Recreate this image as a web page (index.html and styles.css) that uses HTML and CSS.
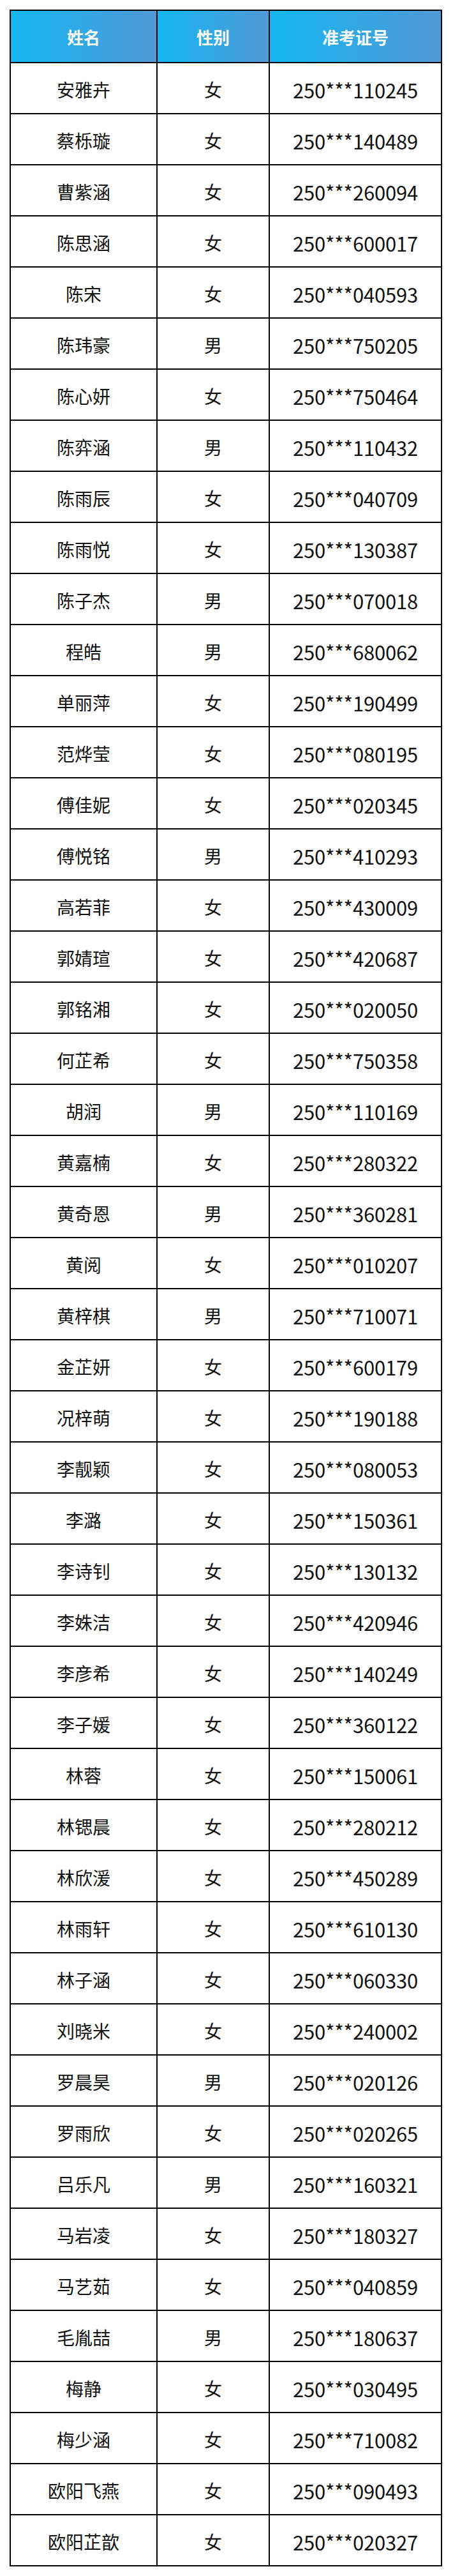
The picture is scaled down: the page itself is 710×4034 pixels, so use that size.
FILE: index.html
```html
<!DOCTYPE html>
<html lang="zh">
<head>
<meta charset="utf-8">
<title>名单</title>
<link rel="stylesheet" href="styles.css">
</head>
<body>
<table class="roster">
<colgroup><col class="c-name"><col class="c-sex"><col class="c-id"></colgroup>
<thead>
<tr><th>姓名</th><th>性别</th><th>准考证号</th></tr>
</thead>
<tbody>
<tr><td>安雅卉</td><td>女</td><td class="num">250***110245</td></tr>
<tr><td>蔡栎璇</td><td>女</td><td class="num">250***140489</td></tr>
<tr><td>曹紫涵</td><td>女</td><td class="num">250***260094</td></tr>
<tr><td>陈思涵</td><td>女</td><td class="num">250***600017</td></tr>
<tr><td>陈宋</td><td>女</td><td class="num">250***040593</td></tr>
<tr><td>陈玮豪</td><td>男</td><td class="num">250***750205</td></tr>
<tr><td>陈心妍</td><td>女</td><td class="num">250***750464</td></tr>
<tr><td>陈弈涵</td><td>男</td><td class="num">250***110432</td></tr>
<tr><td>陈雨辰</td><td>女</td><td class="num">250***040709</td></tr>
<tr><td>陈雨悦</td><td>女</td><td class="num">250***130387</td></tr>
<tr><td>陈子杰</td><td>男</td><td class="num">250***070018</td></tr>
<tr><td>程皓</td><td>男</td><td class="num">250***680062</td></tr>
<tr><td>单丽萍</td><td>女</td><td class="num">250***190499</td></tr>
<tr><td>范烨莹</td><td>女</td><td class="num">250***080195</td></tr>
<tr><td>傅佳妮</td><td>女</td><td class="num">250***020345</td></tr>
<tr><td>傅悦铭</td><td>男</td><td class="num">250***410293</td></tr>
<tr><td>高若菲</td><td>女</td><td class="num">250***430009</td></tr>
<tr><td>郭婧瑄</td><td>女</td><td class="num">250***420687</td></tr>
<tr><td>郭铭湘</td><td>女</td><td class="num">250***020050</td></tr>
<tr><td>何芷希</td><td>女</td><td class="num">250***750358</td></tr>
<tr><td>胡润</td><td>男</td><td class="num">250***110169</td></tr>
<tr><td>黄嘉楠</td><td>女</td><td class="num">250***280322</td></tr>
<tr><td>黄奇恩</td><td>男</td><td class="num">250***360281</td></tr>
<tr><td>黄阅</td><td>女</td><td class="num">250***010207</td></tr>
<tr><td>黄梓棋</td><td>男</td><td class="num">250***710071</td></tr>
<tr><td>金芷妍</td><td>女</td><td class="num">250***600179</td></tr>
<tr><td>况梓萌</td><td>女</td><td class="num">250***190188</td></tr>
<tr><td>李靓颖</td><td>女</td><td class="num">250***080053</td></tr>
<tr><td>李潞</td><td>女</td><td class="num">250***150361</td></tr>
<tr><td>李诗钊</td><td>女</td><td class="num">250***130132</td></tr>
<tr><td>李姝洁</td><td>女</td><td class="num">250***420946</td></tr>
<tr><td>李彦希</td><td>女</td><td class="num">250***140249</td></tr>
<tr><td>李子媛</td><td>女</td><td class="num">250***360122</td></tr>
<tr><td>林蓉</td><td>女</td><td class="num">250***150061</td></tr>
<tr><td>林锶晨</td><td>女</td><td class="num">250***280212</td></tr>
<tr><td>林欣湲</td><td>女</td><td class="num">250***450289</td></tr>
<tr><td>林雨轩</td><td>女</td><td class="num">250***610130</td></tr>
<tr><td>林子涵</td><td>女</td><td class="num">250***060330</td></tr>
<tr><td>刘晓米</td><td>女</td><td class="num">250***240002</td></tr>
<tr><td>罗晨昊</td><td>男</td><td class="num">250***020126</td></tr>
<tr><td>罗雨欣</td><td>女</td><td class="num">250***020265</td></tr>
<tr><td>吕乐凡</td><td>男</td><td class="num">250***160321</td></tr>
<tr><td>马岩凌</td><td>女</td><td class="num">250***180327</td></tr>
<tr><td>马艺茹</td><td>女</td><td class="num">250***040859</td></tr>
<tr><td>毛胤喆</td><td>男</td><td class="num">250***180637</td></tr>
<tr><td>梅静</td><td>女</td><td class="num">250***030495</td></tr>
<tr><td>梅少涵</td><td>女</td><td class="num">250***710082</td></tr>
<tr><td>欧阳飞燕</td><td>女</td><td class="num">250***090493</td></tr>
<tr><td>欧阳芷歆</td><td>女</td><td class="num">250***020327</td></tr>
</tbody>
</table>
</body>
</html>
```

FILE: styles.css
```css
html, body {
  margin: 0;
  padding: 0;
  background: #ffffff;
}
body {
  padding: 15px;
  font-family: "Noto Sans CJK SC", "Noto Sans", sans-serif;
  color: #111111;
}
.roster {
  border-collapse: separate;
  border-spacing: 0;
  table-layout: fixed;
  width: 678px;
  border-top: 2px solid #000;
  border-left: 2px solid #000;
}
.c-name { width: 230px; }
.c-sex { width: 176px; }
.c-id { width: 270px; }
.roster th,
.roster td {
  border-right: 2px solid #000;
  border-bottom: 2px solid #000;
  padding: 0;
  text-align: center;
  vertical-align: middle;
}
.roster th {
  height: 80px;
  background: linear-gradient(to right, #14b6f1, #5199d6);
  color: #ffffff;
  font-size: 26px;
  font-weight: 700;
}
.roster td {
  box-sizing: border-box;
  height: 80px;
  padding-top: 4px;
  font-size: 28px;
  font-weight: 400;
}
.roster td.num {
  font-size: 31px;
  letter-spacing: -0.2px;
}
```
